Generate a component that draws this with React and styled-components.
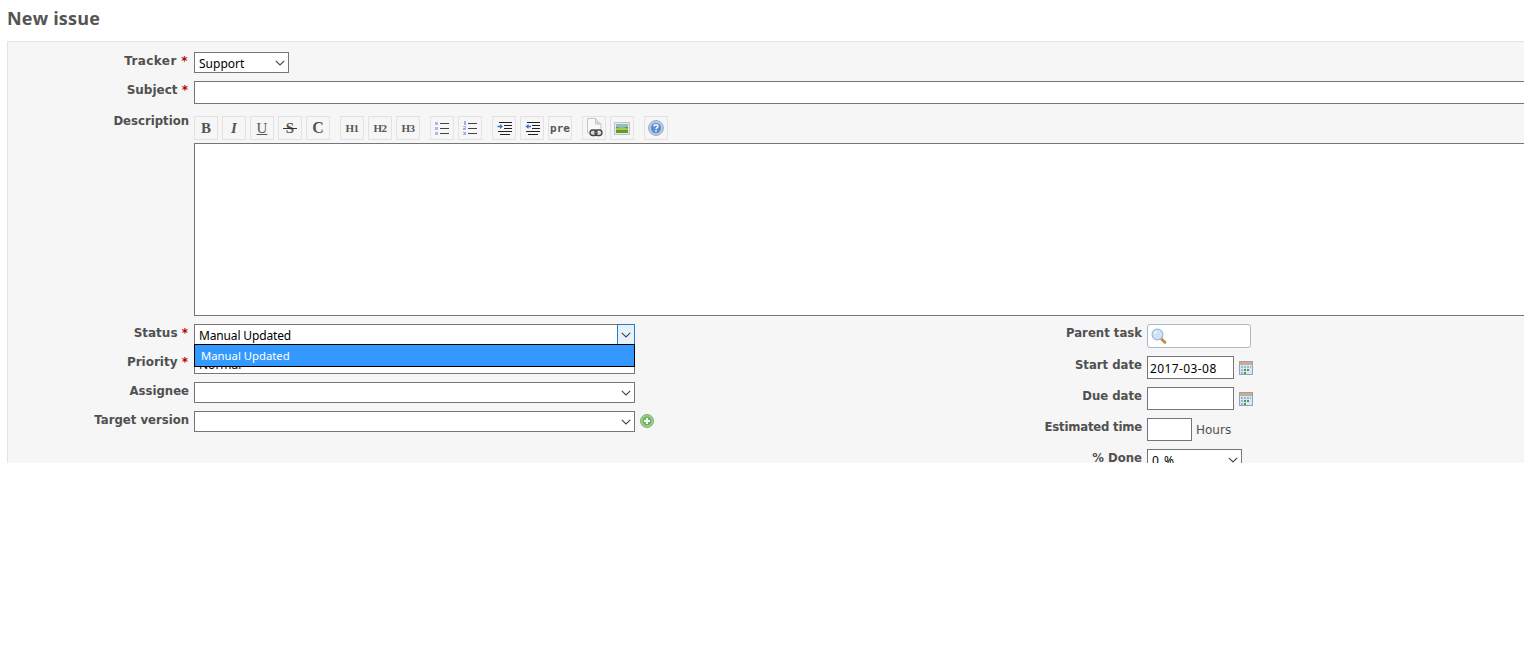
import React from "react";
import styled, { createGlobalStyle } from "styled-components";

const GlobalStyle = createGlobalStyle`
  html, body { margin: 0; padding: 0; background: #fff; overflow: hidden; }
  body { font-family: "DejaVu Sans", Verdana, sans-serif; }
`;

function Chevron() {
  return (
    <svg width="10" height="6" viewBox="0 0 10 6" fill="none">
      <path d="M0.8 0.8 L5 5 L9.2 0.8" stroke="#444" strokeWidth="1.1" />
    </svg>
  );
}

function ListIcon() {
  return (
    <svg width="14" height="14" viewBox="0 0 14 14">
      <g fill="#a9bde0">
        <rect x="0" y="1" width="3" height="3" />
        <rect x="0" y="6" width="3" height="3" />
        <rect x="0" y="11" width="3" height="3" />
      </g>
      <g fill="#444">
        <rect x="5" y="2" width="9" height="1" />
        <rect x="5" y="7" width="9" height="1" />
        <rect x="5" y="12" width="9" height="1" />
      </g>
    </svg>
  );
}

function OrderedIcon() {
  return (
    <svg width="14" height="15" viewBox="0 0 14 15">
      <g fill="#9db3dc">
        <rect x="1" y="0" width="2" height="4" />
        <rect x="0" y="5" width="3" height="1" />
        <rect x="2" y="6" width="1" height="1" />
        <rect x="0" y="7" width="3" height="2" />
        <rect x="0" y="11" width="3" height="1" />
        <rect x="1" y="12" width="2" height="1" />
        <rect x="0" y="13" width="3" height="1" />
      </g>
      <g fill="#444">
        <rect x="5" y="2" width="9" height="1" />
        <rect x="5" y="7" width="9" height="1" />
        <rect x="5" y="12" width="9" height="1" />
      </g>
    </svg>
  );
}

function IndentIcon({ out }) {
  return (
    <svg width="15" height="13" viewBox="0 0 15 13">
      <g fill="#222">
        <rect x="2" y="0" width="13" height="1" />
        <rect x="7" y="3" width="8" height="1" />
        <rect x="7" y="6" width="8" height="1" />
        <rect x="1" y="9" width="14" height="1" />
        <rect x="3" y="12" width="10" height="1" />
      </g>
      {out ? (
        <path d="M0.5 4.5 L3.5 2 L3.5 3.8 L6 3.8 L6 5.2 L3.5 5.2 L3.5 7 Z" fill="#3f74c0" />
      ) : (
        <path d="M6 4.5 L3 2 L3 3.8 L0.5 3.8 L0.5 5.2 L3 5.2 L3 7 Z" fill="#3f74c0" />
      )}
    </svg>
  );
}

function LinkIcon() {
  return (
    <svg width="17" height="19" viewBox="0 0 17 19">
      <path d="M1.5 0.5 H9.5 L15 6 V15 H1.5 Z" fill="#f8f8f8" stroke="#c4c4c4" />
      <path d="M9.5 0.5 V6 H15" fill="#dcdcdc" stroke="#c4c4c4" />
      <rect x="4" y="12" width="7" height="5.5" rx="2.7" fill="#d8d8d8" stroke="#444" strokeWidth="1.3" />
      <rect x="9" y="12" width="7" height="5.5" rx="2.7" fill="none" stroke="#444" strokeWidth="1.3" />
    </svg>
  );
}

function ImageIcon() {
  return (
    <svg width="16" height="13" viewBox="0 0 16 13">
      <rect x="0.5" y="0.5" width="15" height="12" fill="#e8e8e8" stroke="#c2c2c2" />
      <rect x="2" y="2" width="12" height="9" fill="#5f9a2f" />
      <rect x="2" y="2" width="12" height="3" fill="#8cbbe0" />
      <path d="M2 6.5 Q7 3.5 14 6.5 V8 H2 Z" fill="#a7c94e" />
    </svg>
  );
}

function HelpIcon() {
  return (
    <svg width="16" height="16" viewBox="0 0 16 16">
      <circle cx="8" cy="8" r="7.4" fill="#bcd0ea" stroke="#8aa6cf" />
      <circle cx="8" cy="8" r="5.2" fill="#5f8ccb" />
      <path d="M6 6.4 C6 4.2 10 4.2 10 6.4 C10 7.8 8 7.6 8 9" fill="none" stroke="#fff" strokeWidth="1.4" />
      <rect x="7.2" y="10" width="1.6" height="1.6" fill="#fff" />
    </svg>
  );
}

function PlusIcon() {
  return (
    <svg width="14" height="14" viewBox="0 0 14 14">
      <circle cx="7" cy="7" r="6.5" fill="#a5d095" stroke="#7bb068" />
      <circle cx="7" cy="7" r="4.6" fill="#6db359" />
      <path d="M7 4 V10 M4 7 H10" stroke="#fff" strokeWidth="2" />
    </svg>
  );
}

function SearchIcon() {
  return (
    <svg width="16" height="16" viewBox="0 0 16 16">
      <path d="M9.5 10 L14 14.5" stroke="#c08a45" strokeWidth="2.6" strokeLinecap="round" />
      <circle cx="6.5" cy="6.5" r="5.4" fill="#cfe2f6" stroke="#9db9d8" strokeWidth="1.2" />
      <path d="M3.5 6 A3 3 0 0 1 6 3.5" fill="none" stroke="#fff" strokeWidth="1.2" />
    </svg>
  );
}

function CalendarIcon() {
  return (
    <svg width="14" height="14" viewBox="0 0 14 14">
      <rect x="0.5" y="0.5" width="13" height="13" fill="#dbe6f3" stroke="#88a7c8" />
      <rect x="1" y="1" width="12" height="2" fill="#e5a184" />
      <rect x="1" y="3" width="12" height="1" fill="#9fc48e" />
      <g fill="#9db6d3">
        <rect x="2" y="5" width="2" height="2" />
        <rect x="5" y="5" width="2" height="2" />
        <rect x="8" y="5" width="2" height="2" />
        <rect x="11" y="5" width="1" height="2" />
        <rect x="2" y="8" width="2" height="2" />
        <rect x="2" y="11" width="2" height="2" />
      </g>
      <rect x="5" y="8" width="2" height="2" fill="#4f9c46" />
      <rect x="8" y="8" width="2" height="2" fill="#4f9c46" />
      <rect x="5" y="11" width="2" height="2" fill="#4f9c46" />
    </svg>
  );
}

const toolbarButtons = [
  { key: "b", label: "B", bold: true, size: 15 },
  { key: "i", label: "I", bold: true, italic: true, size: 15 },
  { key: "u", label: "U", underline: true, size: 15 },
  { key: "s", label: "S", strike: true, size: 15 },
  { key: "c", label: "C", bold: true, size: 16, groupEnd: true },
  { key: "h1", label: "H1", bold: true, size: 11, tight: true },
  { key: "h2", label: "H2", bold: true, size: 11, tight: true },
  { key: "h3", label: "H3", bold: true, size: 11, tight: true, groupEnd: true },
  { key: "ul", icon: <ListIcon /> },
  { key: "ol", icon: <OrderedIcon />, groupEnd: true },
  { key: "in", icon: <IndentIcon /> },
  { key: "out", icon: <IndentIcon out /> },
  { key: "pre", label: "pre", mono: true, bold: true, size: 11, groupEnd: true },
  { key: "link", icon: <LinkIcon />, low: true },
  { key: "img", icon: <ImageIcon />, groupEnd: true },
  { key: "help", icon: <HelpIcon /> },
];

export default function App() {
  return (
    <Page>
      <GlobalStyle />
      <Title>New issue</Title>
      <Panel>
        <Row $height={21} $after={8}>
          <Label $required $wide>Tracker <Required>*</Required></Label>
          <Select $width={95}>
            Support
            <Arrow><Chevron /></Arrow>
          </Select>
        </Row>
        <Row $height={23} $after={12}>
          <Label $required>Subject <Required>*</Required></Label>
          <WideInput />
        </Row>
        <Row $height={24} $after={3}>
          <Label $raised>Description</Label>
          <Toolbar>
            {toolbarButtons.map((b) => (
              <ToolButton key={b.key} $groupEnd={b.groupEnd} $low={b.low} $bold={b.bold} $italic={b.italic}
                $underline={b.underline} $size={b.size} $mono={b.mono} $tight={b.tight}>
                {b.strike ? <Struck>{b.label}</Struck> : b.icon || b.label}
              </ToolButton>
            ))}
          </Toolbar>
        </Row>
        <Row $height={173} $after={8}>
          <Label />
          <TextArea />
        </Row>
        <Columns>
          <Column>
            <Row $height={21} $after={8}>
              <Label $required>Status <Required>*</Required></Label>
              <SelectWrap>
                <Select $width={441} $tight>
                  Manual Updated
                  <OpenArrow><Chevron /></OpenArrow>
                </Select>
                <Dropdown>
                  <Option>Manual Updated</Option>
                </Dropdown>
              </SelectWrap>
            </Row>
            <Row $height={21} $after={8}>
              <Label $required>Priority <Required>*</Required></Label>
              <Select $width={441}>
                Normal
                <Arrow><Chevron /></Arrow>
              </Select>
            </Row>
            <Row $height={21} $after={8}>
              <Label>Assignee</Label>
              <Select $width={441}>
                <Arrow><Chevron /></Arrow>
              </Select>
            </Row>
            <Row $height={21} $after={0}>
              <Label>Target version</Label>
              <Select $width={441}>
                <Arrow><Chevron /></Arrow>
              </Select>
              <PlusLink><PlusIcon /></PlusLink>
            </Row>
          </Column>
          <Column>
            <Row $height={24} $after={8}>
              <Label>Parent task</Label>
              <SearchInput>
                <SearchIcon />
              </SearchInput>
            </Row>
            <Row $height={23} $after={8}>
              <Label>Start date</Label>
              <TextInput $width={87}>2017-03-08</TextInput>
              <CalendarLink><CalendarIcon /></CalendarLink>
            </Row>
            <Row $height={23} $after={8}>
              <Label>Due date</Label>
              <TextInput $width={87} />
              <CalendarLink><CalendarIcon /></CalendarLink>
            </Row>
            <Row $height={23} $after={8}>
              <Label $narrow>Estimated time</Label>
              <TextInput $width={45} />
              <Unit>Hours</Unit>
            </Row>
            <Row $height={21} $after={0}>
              <Label>% Done</Label>
              <Select $width={95} $wordy>
                0 %
                <Arrow><Chevron /></Arrow>
              </Select>
            </Row>
          </Column>
        </Columns>
      </Panel>
    </Page>
  );
}

const Page = styled.div`
  width: 1524px;
  height: 648px;
  padding-left: 7px;
  box-sizing: border-box;
  overflow: hidden;
`;

const Title = styled.h2`
  margin: 0;
  height: 41px;
  padding-top: 7px;
  box-sizing: border-box;
  font: bold 18px/22px "Open Sans", "Liberation Sans", sans-serif;
  letter-spacing: 0.2px;
  color: #555;
`;

const Panel = styled.div`
  width: 1530px;
  height: 422px;
  box-sizing: border-box;
  padding-top: 10px;
  background: #f6f6f6;
  border-top: 1px solid #e4e4e4;
  border-left: 1px solid #e4e4e4;
  overflow: hidden;
`;

const Row = styled.div`
  display: flex;
  align-items: flex-start;
  gap: 5px;
  height: ${(p) => p.$height}px;
  margin-bottom: ${(p) => p.$after}px;
`;

const Label = styled.label`
  flex: none;
  box-sizing: border-box;
  width: 181px;
  margin-top: ${(p) => (p.$raised ? -3 : 1)}px;
  padding-right: ${(p) => (p.$required ? 1 : 0)}px;
  text-align: right;
  font: bold ${(p) => (p.$required ? 12 : 11.7)}px/16px "DejaVu Sans", Verdana, sans-serif;
  letter-spacing: ${(p) => (p.$wide ? 0.4 : p.$narrow ? -0.2 : 0)}px;
  color: #505050;
`;

const Required = styled.span`
  color: #bb0000;
`;

const Select = styled.div`
  position: relative;
  flex: none;
  width: ${(p) => p.$width}px;
  height: 100%;
  box-sizing: border-box;
  padding: 3px 0 0 4px;
  background: #fff;
  border: 1px solid #767676;
  font: 12px/16px "Noto Sans", "Liberation Sans", sans-serif;
  letter-spacing: ${(p) => (p.$tight ? -0.15 : 0)}px;
  word-spacing: ${(p) => (p.$wordy ? 2 : 0)}px;
  color: #000;
`;

const Arrow = styled.span`
  position: absolute;
  top: 0;
  right: 0;
  bottom: 0;
  width: 16px;
  display: flex;
  align-items: center;
  justify-content: center;
`;

const OpenArrow = styled(Arrow)`
  background: #e5f1fb;
  border: 1px solid #2b7bc0;
  top: -1px;
  right: -1px;
  bottom: -1px;
`;

const SelectWrap = styled.div`
  position: relative;
  height: 100%;
  z-index: 2;
`;

const Dropdown = styled.div`
  position: absolute;
  top: 20px;
  left: 0;
  width: 441px;
  height: 23px;
  box-sizing: border-box;
  background: #3399ff;
  border: 1px solid #000;
`;

const Option = styled.div`
  padding: 1px 0 0 6px;
  font: 11.3px/20px "Noto Sans", "Liberation Sans", sans-serif;
  color: #fff;
`;

const WideInput = styled.div`
  flex: 1;
  height: 100%;
  box-sizing: border-box;
  background: #fff;
  border: 1px solid #767676;
  margin-right: -10px;
`;

const TextArea = styled(WideInput)``;

const Toolbar = styled.div`
  display: flex;
  gap: 4px;
`;

const ToolButton = styled.div`
  flex: none;
  width: 24px;
  height: 24px;
  box-sizing: border-box;
  display: flex;
  align-items: ${(p) => (p.$low ? "flex-end" : "center")};
  justify-content: center;
  margin-right: ${(p) => (p.$groupEnd ? 6 : 0)}px;
  padding-bottom: ${(p) => (p.$low ? 2 : 0)}px;
  background: #f6f6f6;
  border: 1px solid #e2e2e2;
  color: #555;
  font-family: ${(p) => (p.$mono ? '"DejaVu Sans Mono", monospace' : '"Liberation Serif", serif')};
  font-size: ${(p) => p.$size || 12}px;
  font-weight: ${(p) => (p.$bold ? "bold" : "normal")};
  font-style: ${(p) => (p.$italic ? "italic" : "normal")};
  letter-spacing: ${(p) => (p.$tight ? -0.6 : 0)}px;
  text-decoration: ${(p) => (p.$underline ? "underline" : "none")};
`;

const Struck = styled.span`
  position: relative;
  font-weight: bold;

  &::after {
    content: "";
    position: absolute;
    left: -3px;
    right: -3px;
    top: 8px;
    height: 1px;
    background: #333;
  }
`;

const Columns = styled.div`
  display: grid;
  grid-template-columns: 953px 1fr;
`;

const Column = styled.div`
  min-width: 0;
`;

const PlusLink = styled.span`
  display: flex;
  margin-top: 3px;
`;

const SearchInput = styled.div`
  flex: none;
  width: 104px;
  height: 100%;
  box-sizing: border-box;
  padding: 3px 0 0 3px;
  background: #fff;
  border: 1px solid #a9bacb;
  border-radius: 3px;
`;

const TextInput = styled.div`
  flex: none;
  width: ${(p) => p.$width}px;
  height: 100%;
  box-sizing: border-box;
  padding: 3px 0 0 2px;
  background: #fff;
  border: 1px solid #767676;
  font: 12px/18px "Noto Sans", "Liberation Sans", sans-serif;
  letter-spacing: 0.4px;
  color: #000;
`;

const CalendarLink = styled.span`
  display: flex;
  margin-top: 5px;
`;

const Unit = styled.span`
  margin: 3px 0 0 -1px;
  font: 12px/18px "DejaVu Sans", Verdana, sans-serif;
  color: #505050;
`;
